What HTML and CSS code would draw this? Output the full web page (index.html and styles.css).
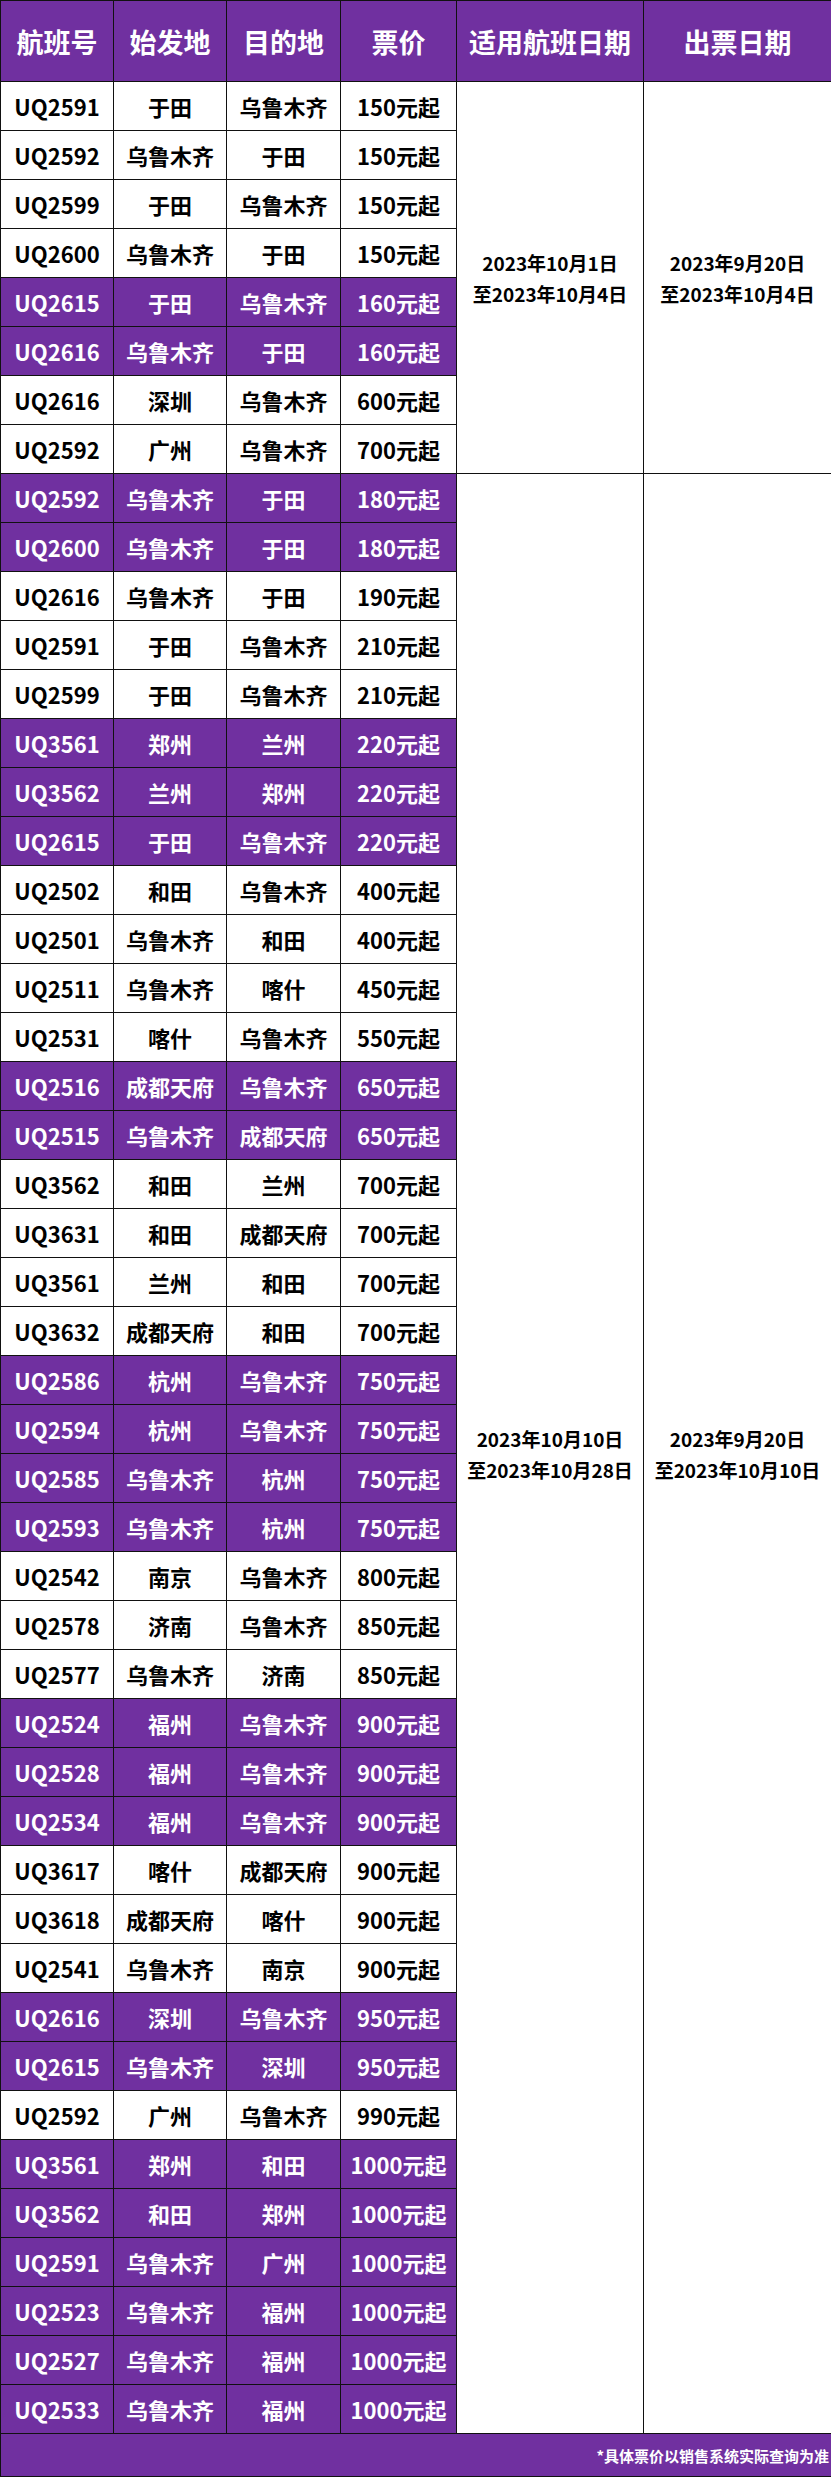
FILE: index.html
```html
<!DOCTYPE html>
<html lang="zh-CN">
<head>
<meta charset="utf-8">
<title>航班票价</title>
<link rel="stylesheet" href="styles.css">
</head>
<body>
<table class="fares">
<colgroup>
<col class="c-no"><col class="c-from"><col class="c-to"><col class="c-price"><col class="c-fly"><col class="c-issue">
</colgroup>
<thead>
<tr class="head"><th>航班号</th><th>始发地</th><th>目的地</th><th>票价</th><th>适用航班日期</th><th>出票日期</th></tr>
</thead>
<tbody>
<tr><td>UQ2591</td><td>于田</td><td>乌鲁木齐</td><td>150元起</td><td class="date" rowspan="8">2023年10月1日<br>至2023年10月4日</td><td class="date" rowspan="8">2023年9月20日<br>至2023年10月4日</td></tr>
<tr><td>UQ2592</td><td>乌鲁木齐</td><td>于田</td><td>150元起</td></tr>
<tr><td>UQ2599</td><td>于田</td><td>乌鲁木齐</td><td>150元起</td></tr>
<tr><td>UQ2600</td><td>乌鲁木齐</td><td>于田</td><td>150元起</td></tr>
<tr class="hl"><td>UQ2615</td><td>于田</td><td>乌鲁木齐</td><td>160元起</td></tr>
<tr class="hl"><td>UQ2616</td><td>乌鲁木齐</td><td>于田</td><td>160元起</td></tr>
<tr><td>UQ2616</td><td>深圳</td><td>乌鲁木齐</td><td>600元起</td></tr>
<tr><td>UQ2592</td><td>广州</td><td>乌鲁木齐</td><td>700元起</td></tr>
<tr class="hl"><td>UQ2592</td><td>乌鲁木齐</td><td>于田</td><td>180元起</td><td class="date" rowspan="40">2023年10月10日<br>至2023年10月28日</td><td class="date" rowspan="40">2023年9月20日<br>至2023年10月10日</td></tr>
<tr class="hl"><td>UQ2600</td><td>乌鲁木齐</td><td>于田</td><td>180元起</td></tr>
<tr><td>UQ2616</td><td>乌鲁木齐</td><td>于田</td><td>190元起</td></tr>
<tr><td>UQ2591</td><td>于田</td><td>乌鲁木齐</td><td>210元起</td></tr>
<tr><td>UQ2599</td><td>于田</td><td>乌鲁木齐</td><td>210元起</td></tr>
<tr class="hl"><td>UQ3561</td><td>郑州</td><td>兰州</td><td>220元起</td></tr>
<tr class="hl"><td>UQ3562</td><td>兰州</td><td>郑州</td><td>220元起</td></tr>
<tr class="hl"><td>UQ2615</td><td>于田</td><td>乌鲁木齐</td><td>220元起</td></tr>
<tr><td>UQ2502</td><td>和田</td><td>乌鲁木齐</td><td>400元起</td></tr>
<tr><td>UQ2501</td><td>乌鲁木齐</td><td>和田</td><td>400元起</td></tr>
<tr><td>UQ2511</td><td>乌鲁木齐</td><td>喀什</td><td>450元起</td></tr>
<tr><td>UQ2531</td><td>喀什</td><td>乌鲁木齐</td><td>550元起</td></tr>
<tr class="hl"><td>UQ2516</td><td>成都天府</td><td>乌鲁木齐</td><td>650元起</td></tr>
<tr class="hl"><td>UQ2515</td><td>乌鲁木齐</td><td>成都天府</td><td>650元起</td></tr>
<tr><td>UQ3562</td><td>和田</td><td>兰州</td><td>700元起</td></tr>
<tr><td>UQ3631</td><td>和田</td><td>成都天府</td><td>700元起</td></tr>
<tr><td>UQ3561</td><td>兰州</td><td>和田</td><td>700元起</td></tr>
<tr><td>UQ3632</td><td>成都天府</td><td>和田</td><td>700元起</td></tr>
<tr class="hl"><td>UQ2586</td><td>杭州</td><td>乌鲁木齐</td><td>750元起</td></tr>
<tr class="hl"><td>UQ2594</td><td>杭州</td><td>乌鲁木齐</td><td>750元起</td></tr>
<tr class="hl"><td>UQ2585</td><td>乌鲁木齐</td><td>杭州</td><td>750元起</td></tr>
<tr class="hl"><td>UQ2593</td><td>乌鲁木齐</td><td>杭州</td><td>750元起</td></tr>
<tr><td>UQ2542</td><td>南京</td><td>乌鲁木齐</td><td>800元起</td></tr>
<tr><td>UQ2578</td><td>济南</td><td>乌鲁木齐</td><td>850元起</td></tr>
<tr><td>UQ2577</td><td>乌鲁木齐</td><td>济南</td><td>850元起</td></tr>
<tr class="hl"><td>UQ2524</td><td>福州</td><td>乌鲁木齐</td><td>900元起</td></tr>
<tr class="hl"><td>UQ2528</td><td>福州</td><td>乌鲁木齐</td><td>900元起</td></tr>
<tr class="hl"><td>UQ2534</td><td>福州</td><td>乌鲁木齐</td><td>900元起</td></tr>
<tr><td>UQ3617</td><td>喀什</td><td>成都天府</td><td>900元起</td></tr>
<tr><td>UQ3618</td><td>成都天府</td><td>喀什</td><td>900元起</td></tr>
<tr><td>UQ2541</td><td>乌鲁木齐</td><td>南京</td><td>900元起</td></tr>
<tr class="hl"><td>UQ2616</td><td>深圳</td><td>乌鲁木齐</td><td>950元起</td></tr>
<tr class="hl"><td>UQ2615</td><td>乌鲁木齐</td><td>深圳</td><td>950元起</td></tr>
<tr><td>UQ2592</td><td>广州</td><td>乌鲁木齐</td><td>990元起</td></tr>
<tr class="hl"><td>UQ3561</td><td>郑州</td><td>和田</td><td>1000元起</td></tr>
<tr class="hl"><td>UQ3562</td><td>和田</td><td>郑州</td><td>1000元起</td></tr>
<tr class="hl"><td>UQ2591</td><td>乌鲁木齐</td><td>广州</td><td>1000元起</td></tr>
<tr class="hl"><td>UQ2523</td><td>乌鲁木齐</td><td>福州</td><td>1000元起</td></tr>
<tr class="hl"><td>UQ2527</td><td>乌鲁木齐</td><td>福州</td><td>1000元起</td></tr>
<tr class="hl"><td>UQ2533</td><td>乌鲁木齐</td><td>福州</td><td>1000元起</td></tr>
</tbody>
<tfoot>
<tr class="foot"><td colspan="6">*具体票价以销售系统实际查询为准</td></tr>
</tfoot>
</table>
</body>
</html>
```
FILE: styles.css
```css
html, body {
  margin: 0;
  padding: 0;
  background: #ffffff;
}
body {
  font-family: "Noto Sans CJK SC", "Noto Sans", sans-serif;
  font-weight: 700;
  color: #000;
}
.fares {
  width: 831px;
  border-collapse: collapse;
  table-layout: fixed;
}
.c-no { width: 113px; }
.c-from { width: 113px; }
.c-to { width: 114px; }
.c-price { width: 116px; }
.c-fly { width: 187px; }
.c-issue { width: 188px; }

.fares th,
.fares td {
  border: 1px solid #111;
  padding: 0;
  text-align: center;
  vertical-align: middle;
  white-space: nowrap;
}
.head th {
  height: 80px;
  background: #7030a0;
  color: #fff;
  font-size: 27px;
  font-weight: 700;
  line-height: 1;
}
tbody tr {
  height: 49px;
}
tbody td {
  font-size: 22px;
  line-height: 1;
  height: 48px;
}
tbody tr.hl td {
  background: #7030a0;
  color: #fff;
}
tbody td.date,
tbody tr.hl td.date {
  background: #fff;
  color: #000;
  font-size: 19px;
  line-height: 31px;
}
.foot td {
  height: 42px;
  background: #7030a0;
  color: #fff;
  font-size: 15px;
  text-align: right;
  padding-right: 2px;
  line-height: 1;
}
```
